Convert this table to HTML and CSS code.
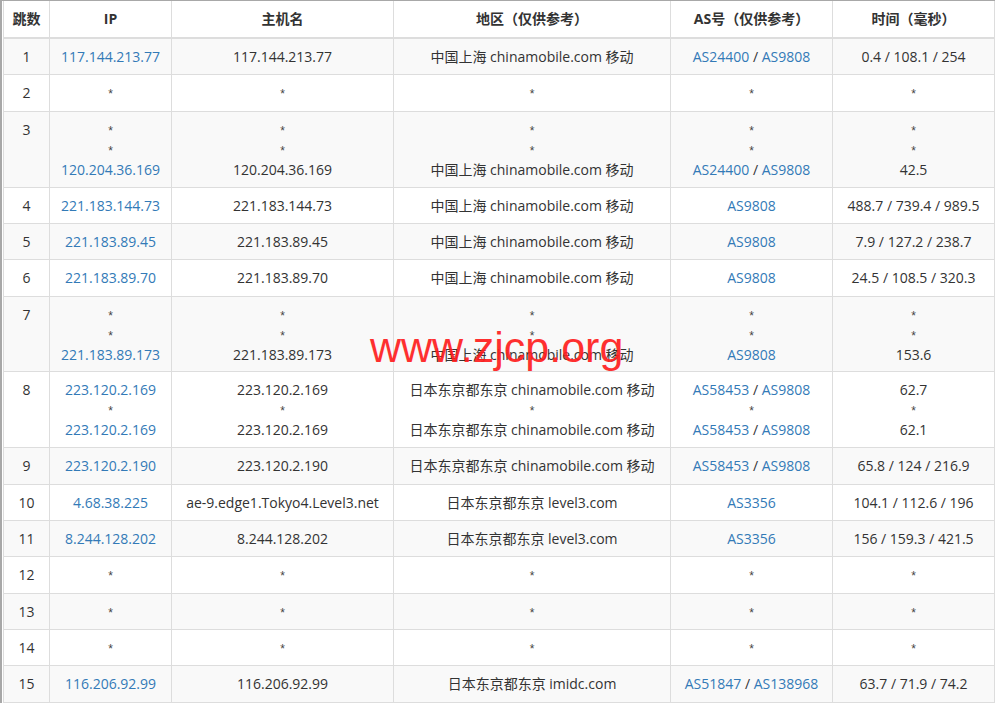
FILE: index.html
```html
<!DOCTYPE html>
<html lang="zh-CN">
<head>
<meta charset="utf-8">
<title>Traceroute</title>
<link rel="stylesheet" href="styles.css">
</head>
<body>
<div class="frame">
  <table class="trace">
    <colgroup>
      <col class="c-hop"><col class="c-ip"><col class="c-host"><col class="c-geo"><col class="c-as"><col class="c-time">
    </colgroup>
    <thead>
      <tr><th>跳数</th><th>IP</th><th>主机名</th><th>地区（仅供参考）</th><th>AS号（仅供参考）</th><th>时间（毫秒）</th></tr>
    </thead>
    <tbody>
      <tr><td>1</td><td><a>117.144.213.77</a></td><td>117.144.213.77</td><td>中国上海 chinamobile.com 移动</td><td><a>AS24400</a> / <a>AS9808</a></td><td>0.4 / 108.1 / 254</td></tr>
      <tr><td>2</td><td><span class="s">*</span></td><td><span class="s">*</span></td><td><span class="s">*</span></td><td><span class="s">*</span></td><td><span class="s">*</span></td></tr>
      <tr class="multi"><td>3</td><td><span class="s">*</span><br><span class="s">*</span><br><a>120.204.36.169</a></td><td><span class="s">*</span><br><span class="s">*</span><br>120.204.36.169</td><td><span class="s">*</span><br><span class="s">*</span><br>中国上海 chinamobile.com 移动</td><td><span class="s">*</span><br><span class="s">*</span><br><a>AS24400</a> / <a>AS9808</a></td><td><span class="s">*</span><br><span class="s">*</span><br>42.5</td></tr>
      <tr><td>4</td><td><a>221.183.144.73</a></td><td>221.183.144.73</td><td>中国上海 chinamobile.com 移动</td><td><a>AS9808</a></td><td>488.7 / 739.4 / 989.5</td></tr>
      <tr><td>5</td><td><a>221.183.89.45</a></td><td>221.183.89.45</td><td>中国上海 chinamobile.com 移动</td><td><a>AS9808</a></td><td>7.9 / 127.2 / 238.7</td></tr>
      <tr><td>6</td><td><a>221.183.89.70</a></td><td>221.183.89.70</td><td>中国上海 chinamobile.com 移动</td><td><a>AS9808</a></td><td>24.5 / 108.5 / 320.3</td></tr>
      <tr class="multi"><td>7</td><td><span class="s">*</span><br><span class="s">*</span><br><a>221.183.89.173</a></td><td><span class="s">*</span><br><span class="s">*</span><br>221.183.89.173</td><td><span class="s">*</span><br><span class="s">*</span><br>中国上海 chinamobile.com 移动</td><td><span class="s">*</span><br><span class="s">*</span><br><a>AS9808</a></td><td><span class="s">*</span><br><span class="s">*</span><br>153.6</td></tr>
      <tr class="multi"><td>8</td><td><a>223.120.2.169</a><br><span class="s">*</span><br><a>223.120.2.169</a></td><td>223.120.2.169<br><span class="s">*</span><br>223.120.2.169</td><td>日本东京都东京 chinamobile.com 移动<br><span class="s">*</span><br>日本东京都东京 chinamobile.com 移动</td><td><a>AS58453</a> / <a>AS9808</a><br><span class="s">*</span><br><a>AS58453</a> / <a>AS9808</a></td><td>62.7<br><span class="s">*</span><br>62.1</td></tr>
      <tr><td>9</td><td><a>223.120.2.190</a></td><td>223.120.2.190</td><td>日本东京都东京 chinamobile.com 移动</td><td><a>AS58453</a> / <a>AS9808</a></td><td>65.8 / 124 / 216.9</td></tr>
      <tr><td>10</td><td><a>4.68.38.225</a></td><td>ae-9.edge1.Tokyo4.Level3.net</td><td>日本东京都东京 level3.com</td><td><a>AS3356</a></td><td>104.1 / 112.6 / 196</td></tr>
      <tr><td>11</td><td><a>8.244.128.202</a></td><td>8.244.128.202</td><td>日本东京都东京 level3.com</td><td><a>AS3356</a></td><td>156 / 159.3 / 421.5</td></tr>
      <tr><td>12</td><td><span class="s">*</span></td><td><span class="s">*</span></td><td><span class="s">*</span></td><td><span class="s">*</span></td><td><span class="s">*</span></td></tr>
      <tr><td>13</td><td><span class="s">*</span></td><td><span class="s">*</span></td><td><span class="s">*</span></td><td><span class="s">*</span></td><td><span class="s">*</span></td></tr>
      <tr><td>14</td><td><span class="s">*</span></td><td><span class="s">*</span></td><td><span class="s">*</span></td><td><span class="s">*</span></td><td><span class="s">*</span></td></tr>
      <tr><td>15</td><td><a>116.206.92.99</a></td><td>116.206.92.99</td><td>日本东京都东京 imidc.com</td><td><a>AS51847</a> / <a>AS138968</a></td><td>63.7 / 71.9 / 74.2</td></tr>
    </tbody>
  </table>
  <div class="watermark">www.zjcp.org</div>
</div>
</body>
</html>
```

FILE: styles.css
```css
html, body {
  margin: 0;
  padding: 0;
  background: #fff;
}

body {
  font-family: "Open Sans", "Noto Sans CJK SC", sans-serif;
  font-size: 14px;
  line-height: 20px;
  color: #333;
}

.frame {
  position: relative;
  width: 992px;
  border-top: 1px solid #a8a8a8;
  border-left: 2px solid #a8a8a8;
  padding-left: 1px;
}

.trace {
  width: 991px;
  table-layout: fixed;
  border-collapse: collapse;
  border-spacing: 0;
}

.c-hop { width: 46px; }
.c-ip { width: 122px; }
.c-host { width: 222px; }
.c-geo { width: 277px; }
.c-as { width: 162px; }
.c-time { width: 162px; }

.trace th,
.trace td {
  border: 1px solid #ddd;
  text-align: center;
  white-space: nowrap;
}

.trace th {
  border-top: none;
  border-bottom: 2px solid #ddd;
  padding: 8px 8px 8px;
  font-weight: 700;
  vertical-align: bottom;
}

.trace td {
  padding: 8px 8px 7.33px;
  vertical-align: top;
}

.trace tr.multi td {
  padding-bottom: 6.9px;
}

.trace tbody tr:nth-child(odd) {
  background: #f9f9f9;
}

.trace a {
  color: #337ab7;
  text-decoration: none;
}

.s {
  font-family: "Liberation Sans", Arial, sans-serif;
  font-size: 12px;
  line-height: 1;
  color: #444;
}

.watermark {
  position: absolute;
  left: 368px;
  top: 325px;
  font-family: "Liberation Sans", Arial, sans-serif;
  font-size: 43px;
  line-height: 43px;
  color: #ff1e1e;
  opacity: 0.92;
  white-space: nowrap;
  pointer-events: none;
}
```
